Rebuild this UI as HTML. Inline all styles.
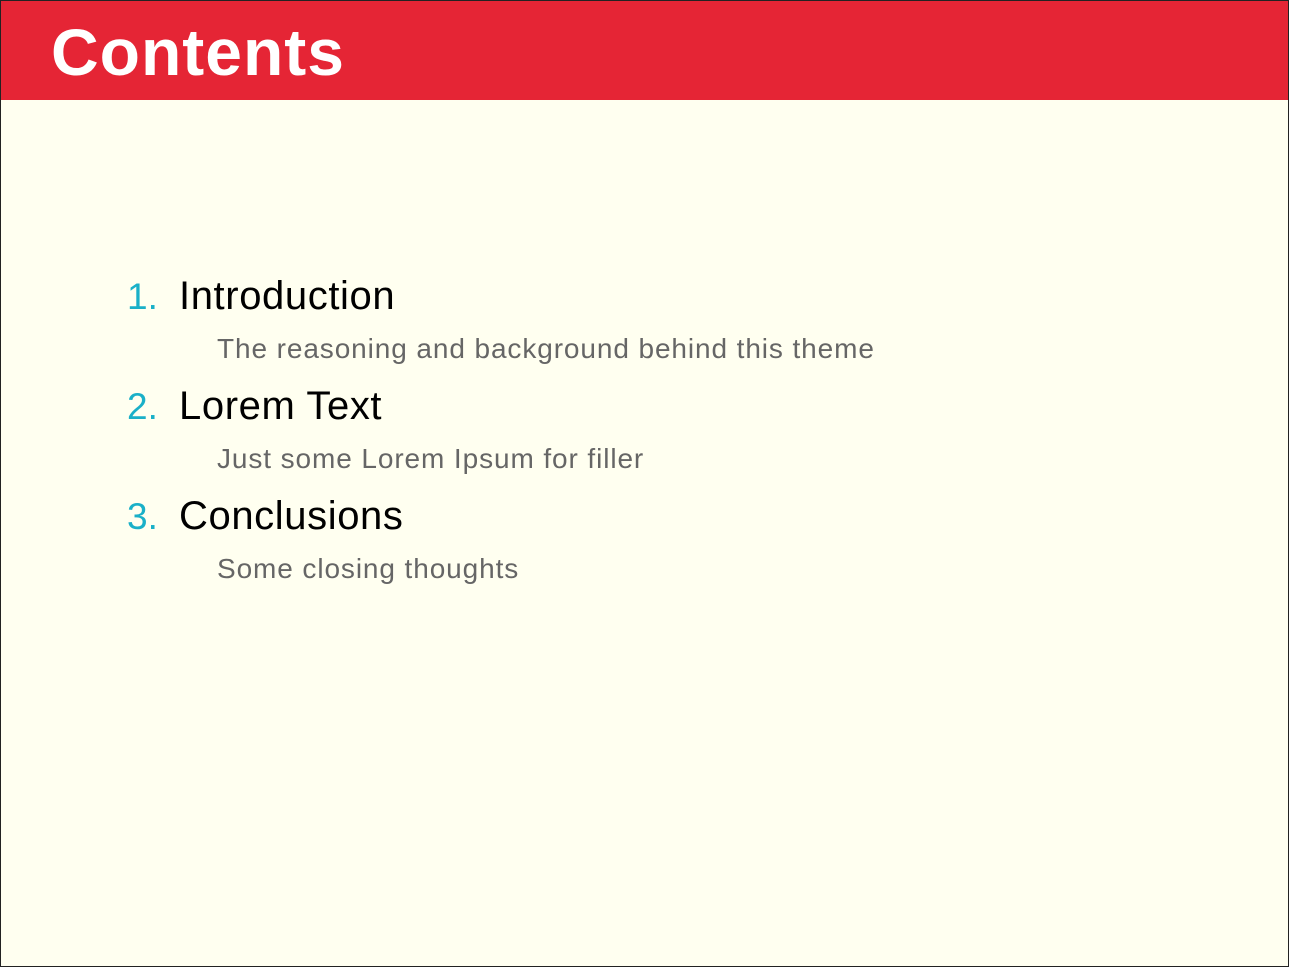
<!DOCTYPE html>
<html><head><meta charset="utf-8"><style>
html,body{margin:0;padding:0;}
body{width:1289px;height:967px;position:relative;background:#fffff0;font-family:"Liberation Sans",sans-serif;overflow:hidden;}
.frame{position:absolute;left:0;top:0;width:1287px;height:965px;border:1px solid #222;}
.hdr{position:absolute;left:1px;top:1px;width:1287px;height:99px;background:#e52535;}
.title{position:absolute;left:51px;top:12px;font-size:66px;font-weight:bold;color:#fff;line-height:80px;letter-spacing:1px;}
.num{position:absolute;left:127px;font-size:37px;color:#1ab0c8;line-height:40px;}
.item{position:absolute;left:179px;font-size:40px;color:#000;line-height:40px;letter-spacing:0.6px;}
.sub{position:absolute;left:217px;font-size:28px;color:#666;line-height:32px;letter-spacing:0.9px;}
</style></head><body>
<div class="frame"></div>
<div class="hdr"></div>
<div class="title">Contents</div>
<div class="num" style="top:277px">1.</div><div class="item" style="top:276px">Introduction</div>
<div class="sub" style="top:333px">The reasoning and background behind this theme</div>
<div class="num" style="top:387px">2.</div><div class="item" style="top:386px">Lorem Text</div>
<div class="sub" style="top:443px">Just some Lorem Ipsum for filler</div>
<div class="num" style="top:497px">3.</div><div class="item" style="top:496px">Conclusions</div>
<div class="sub" style="top:553px">Some closing thoughts</div>
</body></html>
